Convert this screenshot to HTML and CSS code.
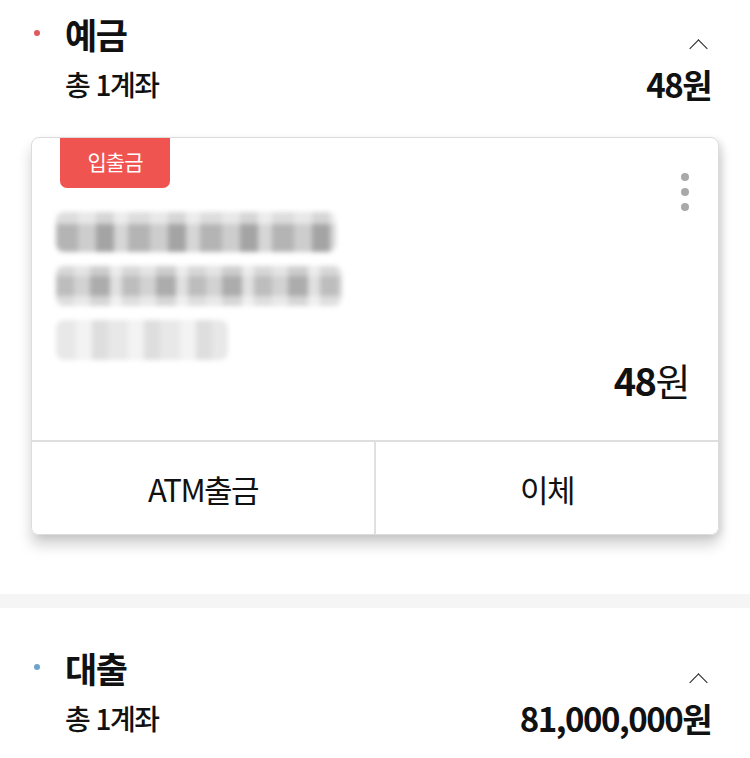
FILE: index.html
```
<!DOCTYPE html>
<html lang="ko">
<head>
<meta charset="utf-8">
<title>계좌</title>
<link rel="stylesheet" href="styles.css">
</head>
<body>
	<section class="group">
		<div class="group-head">
			<span class="dot dot-red"></span>
			<h2 class="group-title">예금</h2>
			<span class="chevron"></span>
		</div>
		<div class="group-sum">
			<span class="count">총 1계좌</span>
			<span class="total">48원</span>
		</div>

		<div class="card">
			<div class="card-body">
				<span class="badge">입출금</span>
				<span class="more"><i></i><i></i><i></i></span>
				<div class="masked">
					<div class="mask m1"></div>
					<div class="mask m2"></div>
					<div class="mask m3"></div>
				</div>
				<div class="balance"><b>48</b>원</div>
			</div>
			<div class="card-actions">
				<button class="action">ATM출금</button>
				<button class="action">이체</button>
			</div>
		</div>
	</section>

	<div class="band"></div>

	<section class="group group-loan">
		<div class="group-head">
			<span class="dot dot-blue"></span>
			<h2 class="group-title">대출</h2>
			<span class="chevron"></span>
		</div>
		<div class="group-sum">
			<span class="count">총 1계좌</span>
			<span class="total">81,000,000원</span>
		</div>
	</section>
</body>
</html>
```
FILE: styles.css
```
body{
	margin: 0;
	background: #fff;
	font-family: "Noto Sans CJK KR", "Noto Sans", sans-serif;
	color: #111;
	overflow: hidden;
}

.group{
	padding: 8px 39px 0 31px;
}

.group-head{
	display: flex;
	align-items: center;
	height: 50px;
}

.dot{
	width: 6px;
	height: 6px;
	border-radius: 50%;
	margin: 0 25px 0 3px;
}
.dot-red{ background: #de5a5f; }
.dot-blue{ background: #6fa3cc; }

.group-title{
	margin: 0;
	font-size: 35px;
	font-weight: 700;
	letter-spacing: -1.5px;
	flex: 1;
}

.chevron{
	width: 12px;
	height: 12px;
	border-left: 1.8px solid #222;
	border-top: 1.8px solid #222;
	transform: rotate(45deg);
	margin: 30px 6px 0 0;
}

.group-sum{
	display: flex;
	justify-content: space-between;
	align-items: center;
	padding-left: 34px;
	height: 52px;
}

.count{
	font-size: 28px;
	font-weight: 500;
	letter-spacing: -1.5px;
}

.total{
	font-size: 33px;
	font-weight: 700;
	letter-spacing: -1.5px;
}

.card{
	margin: 27px -8px 0 0;
	border: 1px solid #dcdcdc;
	border-radius: 8px;
	box-shadow: 0 10px 14px rgba(0,0,0,0.18), 4px 2px 6px rgba(0,0,0,0.08);
	overflow: hidden;
}

.card-body{
	position: relative;
	height: 302px;
	padding: 0 24px;
}

.badge{
	position: absolute;
	left: 28px;
	top: 0;
	width: 110px;
	height: 50px;
	line-height: 46px;
	text-align: center;
	background: #ef5450;
	color: #fff;
	font-size: 21px;
	letter-spacing: -1px;
	border-radius: 0 0 7px 7px;
}

.more{
	position: absolute;
	right: 29px;
	top: 35px;
	display: flex;
	flex-direction: column;
	gap: 7px;
}
.more i{
	width: 8px;
	height: 8px;
	border-radius: 50%;
	background: #a9a9a9;
}

.masked{
	padding-top: 74px;
	display: flex;
	flex-direction: column;
	gap: 14px;
}

.mask{
	height: 40px;
	border-radius: 8px;
	filter: blur(2.5px);
}
.m1{
	width: 280px;
	background:
		linear-gradient(180deg, rgba(255,255,255,0.55) 0 30%, rgba(255,255,255,0) 30% 100%),
		repeating-linear-gradient(90deg, #b4b4b4 0 22px, #cdcdcd 22px 40px, #a4a4a4 40px 58px, #d6d6d6 58px 72px);
}
.m2{
	width: 286px;
	background:
		linear-gradient(180deg, rgba(255,255,255,0.4) 0 25%, rgba(255,255,255,0) 25% 75%, rgba(255,255,255,0.5) 75% 100%),
		repeating-linear-gradient(90deg, #bdbdbd 0 18px, #d2d2d2 18px 34px, #acacac 34px 54px, #e0e0e0 54px 66px);
}
.m3{
	width: 172px;
	background: repeating-linear-gradient(90deg, #e8e8e8 0 20px, #f3f3f3 20px 36px, #dedede 36px 52px);
}

.balance{
	position: absolute;
	right: 29px;
	top: 214px;
	font-size: 38px;
	letter-spacing: -1.5px;
}
.balance b{
	font-weight: 700;
}

.card-actions{
	display: flex;
	border-top: 2px solid #dedede;
	height: 92px;
}

.action{
	flex: 1;
	border: 0;
	background: #fff;
	font-family: inherit;
	font-size: 31px;
	color: #111;
	letter-spacing: -1.5px;
	padding: 0;
}
.action + .action{
	border-left: 2px solid #e0e0e0;
}

.band{
	margin-top: 59px;
	height: 14px;
	background: #f5f5f5;
}

.group-loan{
	padding-top: 34px;
}
```
